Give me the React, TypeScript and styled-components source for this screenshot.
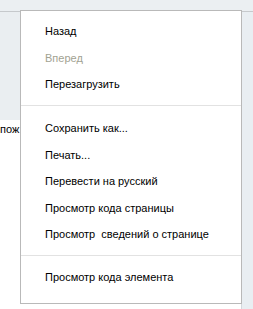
import React from "react";
import styled, { createGlobalStyle } from "styled-components";

const Global = createGlobalStyle`
  html, body { margin: 0; padding: 0; background: #ffffff; }
  body { width: 253px; height: 309px; overflow: hidden; font-family: Tahoma, "DejaVu Sans", sans-serif; }
`;

const Page = styled.div`
  position: relative;
  width: 253px;
  height: 309px;
  display: flex;
  flex-direction: column;
  background: #ffffff;
`;

const TopBar = styled.div`
  height: 11px;
  background: #ebeff2;
  border-bottom: 1px solid #c6c9cc;
  flex-shrink: 0;
`;

const Body = styled.div`
  flex: 1;
  display: flex;
`;

const Main = styled.div`
  flex: 1;
  display: flex;
  flex-direction: column;
`;

const Panel = styled.div`
  height: 108px;
  background: #eaeef1;
`;

const PanelText = styled.div`
  margin-left: 0;
  margin-top: 2px;
  font-family: "Liberation Sans", sans-serif;
  font-size: 11px;
  line-height: 14px;
  color: #000;
`;

const Sidebar = styled.div`
  width: 11px;
  background: #e9eef2;
  border-left: 1px solid #d4d8dc;
`;

const Menu = styled.div`
  position: absolute;
  left: 20px;
  top: 10px;
  width: 220px;
  height: 285px;
  background: #ffffff;
  border: 1px solid #b9b9b9;
  padding: 7px 0 0 0;
  box-sizing: content-box;
  display: flex;
  flex-direction: column;
`;

const Item = styled.div<{ $disabled?: boolean }>`
  height: 26.5px;
  display: flex;
  align-items: center;
  padding-left: 24px;
  font-family: "Liberation Sans", sans-serif;
  font-size: 11px;
  color: ${(p) => (p.$disabled ? "#a2a292" : "#000000")};
  white-space: pre;
`;

const Separator = styled.div<{ $before: number; $after: number }>`
  height: 1px;
  background: #e2e2e2;
  margin: ${(p) => p.$before}px 0 ${(p) => p.$after}px 0;
`;

export default function App() {
  return (
    <>
      <Global />
      <Page>
        <TopBar />
        <Body>
          <Main>
            <Panel />
            <PanelText>пож</PanelText>
          </Main>
          <Sidebar />
        </Body>
        <Menu>
          <Item>Назад</Item>
          <Item $disabled>Вперед</Item>
          <Item>Перезагрузить</Item>
          <Separator $before={7.5} $after={8.75} />
          <Item>Сохранить как...</Item>
          <Item>Печать...</Item>
          <Item>Перевести на русский</Item>
          <Item>Просмотр кода страницы</Item>
          <Item>Просмотр  сведений о странице</Item>
          <Separator $before={7.75} $after={7.75} />
          <Item>Просмотр кода элемента</Item>
        </Menu>
      </Page>
    </>
  );
}
